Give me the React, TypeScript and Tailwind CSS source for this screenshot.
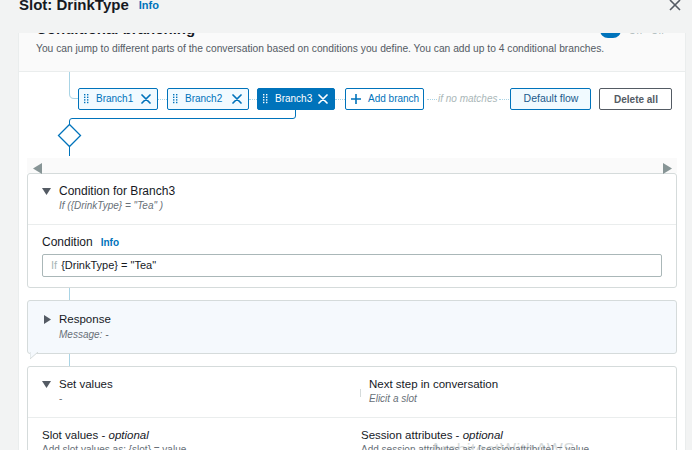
import React from 'react';

const Grip = ({ color }: { color: string }) => (
  <svg width="5" height="10" viewBox="0 0 5 10" fill={color}>
    {[0, 2.6, 5.2, 7.8].map((y) => (
      <g key={y}>
        <rect x="0" y={y} width="1.4" height="1.4" />
        <rect x="3" y={y} width="1.4" height="1.4" />
      </g>
    ))}
  </svg>
);

const Cross = ({ color }: { color: string }) => (
  <svg width="10" height="10" viewBox="0 0 10 10" stroke={color} strokeWidth="1.7" strokeLinecap="round">
    <path d="M1 1 9 9M9 1 1 9" />
  </svg>
);

function Branch({ label, active, className }: { label: string; active?: boolean; className: string }) {
  return (
    <div
      className={`flex h-[22px] shrink-0 items-center rounded-[2px] border border-[#0073bb] pl-[5px] pr-[6px] ${
        active ? 'bg-[#0073bb] text-white' : 'bg-[#f1faff] text-[#0073bb]'
      } ${className}`}
    >
      <Grip color={active ? '#ffffff' : '#0073bb'} />
      <span className="ml-[7px] text-[10px] leading-[20px]">{label}</span>
      <span className="ml-auto">
        <Cross color={active ? '#ffffff' : '#0073bb'} />
      </span>
    </div>
  );
}

const Dots = ({ className }: { className: string }) => (
  <div className={`h-0 shrink-0 border-t border-dotted border-[#a9d4e5] ${className}`} />
);

const Down = () => (
  <svg width="9" height="7" viewBox="0 0 9 7" className="shrink-0">
    <path d="M0 0h9L4.5 7z" fill="#545b64" />
  </svg>
);

const Right = () => (
  <svg width="7" height="9" viewBox="0 0 7 9" className="shrink-0">
    <path d="M0 0v9l7-4.5z" fill="#545b64" />
  </svg>
);

const Link = () => <div className="ml-[42px] h-[12px] w-px bg-[#a9d4e5]" />;

export default function App() {
  return (
    <div className="relative h-[450px] w-[692px] overflow-hidden bg-[#f2f3f3] font-['Liberation_Sans',Arial,sans-serif] text-[#16191f]">
      {/* modal header */}
      <div className="flex h-[33px] items-start pl-[19px] pr-[11px]">
        <h1 className="-mt-[3px] text-[15px] font-bold leading-[15px]">Slot: DrinkType</h1>
        <span className="ml-[10px] -mt-[1px] text-[11px] font-bold leading-[13px] text-[#0073bb]">Info</span>
        <svg width="12" height="12" viewBox="0 0 12 12" className="ml-auto -mt-[1px]" stroke="#545b64" strokeWidth="1.6">
          <path d="M1 1l10 10M11 1 1 11" />
        </svg>
      </div>

      {/* panel */}
      <div className="ml-[18px] h-[417px] w-[668px] overflow-hidden border-x border-[#eaeded] bg-white">
        <div className="h-[39px] overflow-hidden border-b border-[#eaeded] bg-[#fafafa] px-[17px]">
          <div className="-mt-[12px] flex h-[15px] items-end">
            <span className="text-[15px] font-bold leading-[15px]">Conditional branching</span>
            <span className="ml-[8px] text-[11px] font-bold leading-[13px] text-[#0073bb]">Info</span>
            <div className="ml-auto mr-[4px] flex items-end gap-[8px]">
              <div className="mb-[-2px] h-[16px] w-[21px] rounded-full bg-[#0073bb]" />
              <span className="text-[10px] leading-[11px] text-[#aab7b8]">On · Off</span>
            </div>
          </div>
          <p className="mt-[6px] text-[10.25px] leading-[14px] text-[#545b64]">
            You can jump to different parts of the conversation based on conditions you define. You can add up to 4 conditional branches.
          </p>
        </div>

        {/* branch flow */}
        <div className="relative h-[86px]">
          <svg className="pointer-events-none absolute inset-0" width="666" height="86" fill="none">
            <path d="M50.5 0V22Q50.5 26.5 55 26.5H59" stroke="#a9d4e5" />
            <path d="M276.5 38V44Q276.5 46.5 274 46.5H53Q50.5 46.5 50.5 49V52" stroke="#0073bb" />
            <path d="M50.5 52.5 61.5 63.5 50.5 74.5 39.5 63.5Z" stroke="#0073bb" strokeWidth="1.3" fill="#fff" />
            <path d="M50.5 75V84" stroke="#0073bb" />
          </svg>
          <div className="flex items-center pl-[59px] pt-[16px]">
            <Branch label="Branch1" className="w-[80px]" />
            <Dots className="w-[9px]" />
            <Branch label="Branch2" className="w-[82px]" />
            <Dots className="w-[8px]" />
            <Branch label="Branch3" active className="w-[78px]" />
            <Dots className="w-[10px]" />
            <div className="flex h-[22px] w-[79px] shrink-0 items-center rounded-[2px] border border-[#0073bb] bg-white pl-[5px] text-[#0073bb]">
              <svg width="10" height="10" viewBox="0 0 10 10" stroke="#0073bb" strokeWidth="1.6">
                <path d="M5 0v10M0 5h10" />
              </svg>
              <span className="ml-[7px] text-[10px] leading-[20px]">Add branch</span>
            </div>
            <Dots className="ml-[3px] w-[10px]" />
            <span className="ml-[1px] text-[10px] italic leading-[20px] text-[#aab7b8]">if no matches</span>
            <Dots className="ml-[2px] w-[10px]" />
            <div className="ml-[1px] flex h-[22px] w-[81px] shrink-0 items-center justify-center rounded-[2px] border border-[#0073bb] bg-[#f1faff] text-[10.5px] text-[#1b5a8c]">
              Default flow
            </div>
            <div className="ml-[8px] flex h-[22px] w-[73px] shrink-0 items-center justify-center rounded-[2px] border border-[#545b64] bg-white text-[10px] font-bold text-[#545b64]">
              Delete all
            </div>
          </div>
        </div>

        <div className="px-[8px]">
          {/* scroll strip */}
          <div className="flex h-[15px] items-end justify-between bg-[#fafafa] pl-[6px] pr-[5px]">
            <svg width="9" height="11" viewBox="0 0 9 11" className="-mb-[1px]">
              <path d="M9 0v11L0 5.5z" fill="#879596" />
            </svg>
            <svg width="9" height="11" viewBox="0 0 9 11" className="-mb-[1px]">
              <path d="M0 0v11l9-5.5z" fill="#879596" />
            </svg>
          </div>

          {/* condition card */}
          <div className="rounded-[3px] border border-[#d5dbdb] bg-white">
            <div className="h-[51px] border-b border-[#eaeded] px-[14px] pt-[10px]">
              <div className="flex items-center">
                <Down />
                <span className="ml-[8px] text-[12px] leading-[15px]">Condition for Branch3</span>
              </div>
              <p className="pl-[17px] text-[10px] italic leading-[13px] text-[#687078]">If ({'{'}DrinkType{'}'} = "Tea" )</p>
            </div>
            <div className="px-[14px] pb-[10px] pt-[9px]">
              <div className="flex items-baseline">
                <span className="text-[12px] leading-[16px]">Condition</span>
                <span className="ml-[8px] text-[10px] font-bold text-[#0073bb]">Info</span>
              </div>
              <div className="mt-[4px] flex h-[23px] items-center rounded-[2px] border border-[#aab7b8] pl-[8px] text-[11px]">
                <span className="text-[#aab7b8]">If</span>
                <span className="ml-[4px]">{'{'}DrinkType{'}'} = "Tea"</span>
              </div>
            </div>
          </div>

          <Link />

          {/* response card */}
          <div className="relative h-[54px] rounded-[3px] border border-[#d5dbdb] bg-[#f5f9fd] px-[16px] pt-[11px]">
            <div className="flex items-center">
              <Right />
              <span className="ml-[8px] text-[11.5px] leading-[15px]">Response</span>
            </div>
            <p className="mt-[1px] pl-[15px] text-[10px] italic leading-[13px] text-[#687078]">Message: -</p>
            <svg width="9" height="8" viewBox="0 0 9 8" className="absolute -bottom-[7px] left-[2px]">
              <path d="M0 0v7L8 0" fill="#f5f9fd" stroke="#d5dbdb" />
            </svg>
          </div>

          <Link />

          {/* set values card */}
          <div className="rounded-[3px] border border-[#d5dbdb] bg-white">
            <div className="flex h-[51px] border-b border-[#eaeded] pt-[10px]">
              <div className="w-[332px] px-[14px]">
                <div className="flex items-center">
                  <Down />
                  <span className="ml-[8px] text-[11.5px] leading-[15px]">Set values</span>
                </div>
                <p className="pl-[17px] text-[10px] leading-[13px] text-[#687078]">-</p>
              </div>
              <div className="flex">
                <div className="mt-[12px] h-[8px] w-px bg-[#d5dbdb]" />
                <div className="ml-[8px]">
                  <div className="text-[11.5px] leading-[15px]">Next step in conversation</div>
                  <p className="text-[10px] italic leading-[13px] text-[#687078]">Elicit a slot</p>
                </div>
              </div>
            </div>
            <div className="flex pt-[10px]">
              <div className="w-[332px] px-[14px]">
                <div className="text-[11.5px] leading-[15px]">
                  Slot values - <i>optional</i>
                </div>
                <p className="text-[10px] leading-[13px] text-[#687078]">Add slot values as: {'{'}slot{'}'} = value</p>
              </div>
              <div className="pl-[1px]">
                <div className="text-[11.5px] leading-[15px]">
                  Session attributes - <i>optional</i>
                </div>
                <p className="text-[10px] leading-[13px] text-[#687078]">Add session attributes as: [sessionattribute] = value</p>
              </div>
            </div>
          </div>
        </div>
      </div>

      <span className="pointer-events-none absolute left-[430px] top-[437px] text-[17px] tracking-wide text-[#9aa5a6] opacity-40">
        ArchitectWithAWS
      </span>
    </div>
  );
}
